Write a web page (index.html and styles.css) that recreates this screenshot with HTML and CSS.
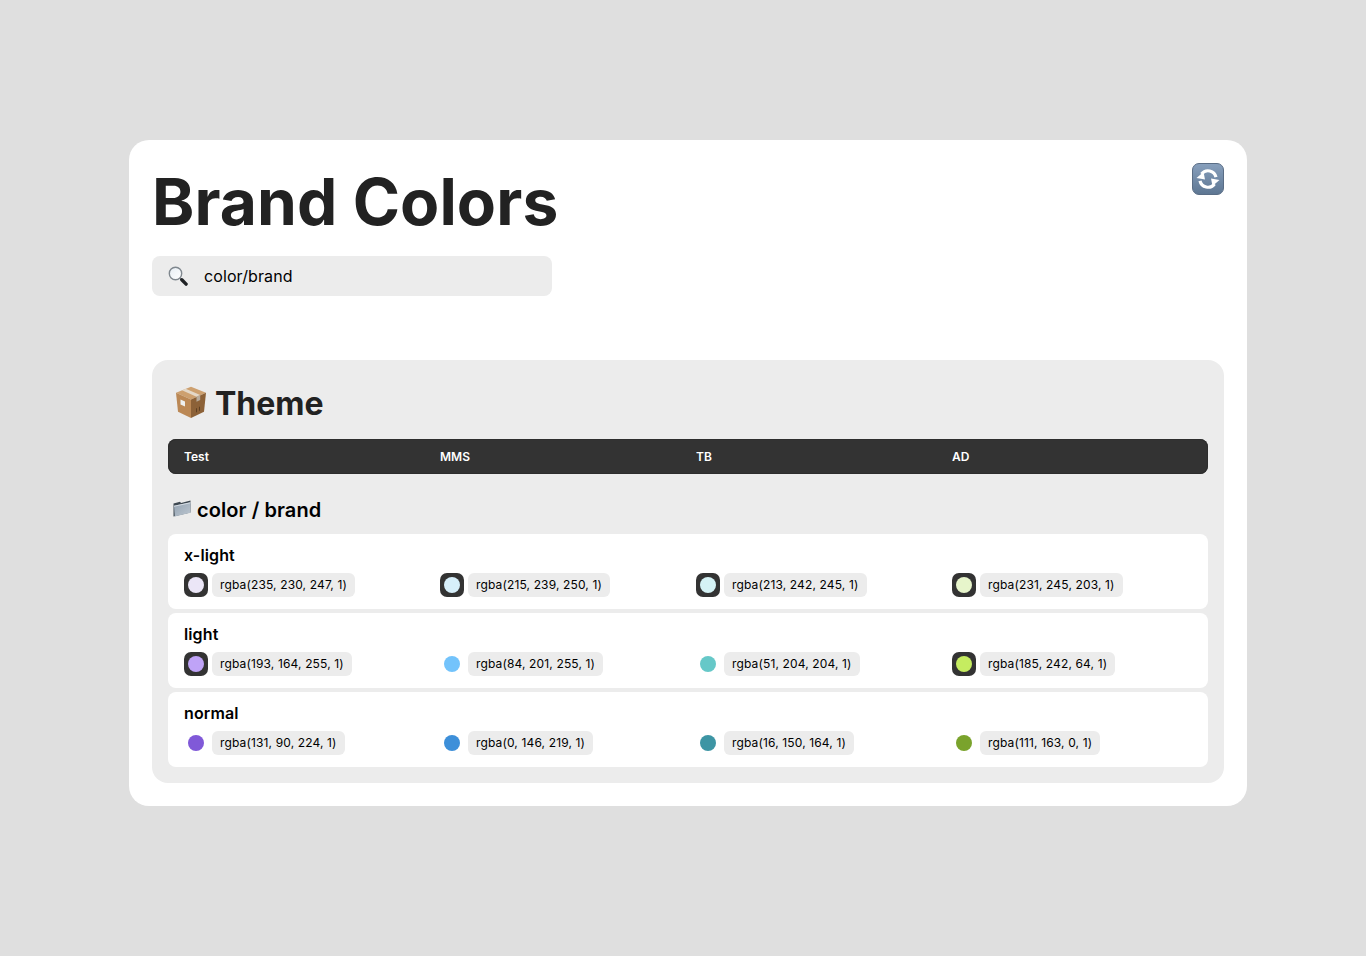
FILE: index.html
```html
<!DOCTYPE html>
<html lang="en">
<head>
<meta charset="utf-8">
<title>Brand Colors</title>
<link rel="stylesheet" href="styles.css">
</head>
<body>
<main class="card">
  <button class="refresh" aria-label="Refresh">
    <svg viewBox="0 0 32 32" width="32" height="32">
      <defs><linearGradient id="rg" x1="0" y1="0" x2="0" y2="1"><stop offset="0" stop-color="#88a0bd"/><stop offset="1" stop-color="#5d7692"/></linearGradient></defs>
      <rect x="0.500" y="0.500" width="31" height="31" rx="6.500" fill="url(#rg)" stroke="#5a6d85"/>
      <path d="M9.500 11A8.200 8.200 0 0 1 24 14.200" fill="none" stroke="#fff" stroke-width="3.200"/>
      <path d="M4.500 15L11.500 9 13 16.500z" fill="#fff"/>
      <path d="M22.500 21A8.200 8.200 0 0 1 8 17.800" fill="none" stroke="#fff" stroke-width="3.200"/>
      <path d="M27.500 17L20.500 23 19 15.500z" fill="#fff"/>
    </svg>
  </button>
  <h1 class="title">Brand Colors</h1>
  <div class="search">
    <svg class="search-icon" viewBox="0 0 20 20" width="20" height="20">
      <defs><linearGradient id="lens" x1="0" y1="0" x2="1" y2="1"><stop offset="0" stop-color="#e6edf3"/><stop offset="1" stop-color="#ffffff"/></linearGradient></defs>
      <circle cx="7.500" cy="7.500" r="6.200" fill="url(#lens)" stroke="#7f878e" stroke-width="1.400"/>
      <path d="M12 12l1.600 1.600" stroke="#8d959c" stroke-width="1.600"/>
      <path d="M13.800 13.800l4.300 4.300" stroke="#1f2225" stroke-width="3.400" stroke-linecap="round"/>
    </svg>
    <span class="search-text">color/brand</span>
  </div>
  <section class="panel">
    <h2 class="panel-title">
      <svg class="box-icon" viewBox="0 0 32 32" width="32" height="32">
        <path d="M16 .8L31 6.800 16 13.500 1 6.800z" fill="#cda06f"/>
        <path d="M1 6.800L16 13.500V32L3 25.800z" fill="#bb8855"/>
        <path d="M31 6.800L16 13.500V32L29 25.800z" fill="#8c6137"/>
        <path d="M7 4.300l14.500 6.500 3.700-1.700L10.700 2.800z" fill="#e4d8c8"/>
        <path d="M21.500 10.800v5l3.700-1.800V9.100z" fill="#b8ab9b"/>
        <path d="M5.500 13.500l4.500 2v5l-4.500-2z" fill="#eef0f0"/>
        <path d="M21 22.500l1-.5v4l-1 .5zM24 21l1-.5v4l-1 .5z" fill="#5e3f22"/>
      </svg>
      <span>Theme</span>
    </h2>
    <div class="columns header">
      <div>Test</div><div>MMS</div><div>TB</div><div>AD</div>
    </div>
    <h3 class="group-title">
      <svg class="folder-icon" viewBox="0 0 20 20" width="20" height="20">
        <defs><linearGradient id="fold" x1="0" y1="0" x2="1" y2="1"><stop offset="0" stop-color="#94a3b2"/><stop offset="1" stop-color="#bcc6d0"/></linearGradient></defs>
        <path d="M1.500 5.500l6.500-1.800 1 1.300 9.500-2.500v12L1.500 18.500z" fill="#3f4952"/>
        <path d="M2 7.800L18.500 4.200v10.600L2.800 18.500z" fill="url(#fold)"/>
        <path d="M2 7.800L18.500 4.200v1L2.100 8.800z" fill="#d5dce3"/>
      </svg>
      <span>color / brand</span>
    </h3>
    <div class="rows">
      <article class="row">
        <h4 class="row-name">x-light</h4>
        <div class="columns">
          <div class="cell"><span class="swatch ring"><i class="dot c-a1"></i></span><span class="value">rgba(235, 230, 247, 1)</span></div>
          <div class="cell"><span class="swatch ring"><i class="dot c-b1"></i></span><span class="value">rgba(215, 239, 250, 1)</span></div>
          <div class="cell"><span class="swatch ring"><i class="dot c-c1"></i></span><span class="value">rgba(213, 242, 245, 1)</span></div>
          <div class="cell"><span class="swatch ring"><i class="dot c-d1"></i></span><span class="value">rgba(231, 245, 203, 1)</span></div>
        </div>
      </article>
      <article class="row">
        <h4 class="row-name">light</h4>
        <div class="columns">
          <div class="cell"><span class="swatch ring"><i class="dot c-a2"></i></span><span class="value">rgba(193, 164, 255, 1)</span></div>
          <div class="cell"><span class="swatch"><i class="dot c-b2"></i></span><span class="value">rgba(84, 201, 255, 1)</span></div>
          <div class="cell"><span class="swatch"><i class="dot c-c2"></i></span><span class="value">rgba(51, 204, 204, 1)</span></div>
          <div class="cell"><span class="swatch ring"><i class="dot c-d2"></i></span><span class="value">rgba(185, 242, 64, 1)</span></div>
        </div>
      </article>
      <article class="row">
        <h4 class="row-name">normal</h4>
        <div class="columns">
          <div class="cell"><span class="swatch"><i class="dot c-a3"></i></span><span class="value">rgba(131, 90, 224, 1)</span></div>
          <div class="cell"><span class="swatch"><i class="dot c-b3"></i></span><span class="value">rgba(0, 146, 219, 1)</span></div>
          <div class="cell"><span class="swatch"><i class="dot c-c3"></i></span><span class="value">rgba(16, 150, 164, 1)</span></div>
          <div class="cell"><span class="swatch"><i class="dot c-d3"></i></span><span class="value">rgba(111, 163, 0, 1)</span></div>
        </div>
      </article>
    </div>
  </section>
</main>
</body>
</html>
```
FILE: styles.css
```css
* { box-sizing: border-box; }
html, body { margin: 0; padding: 0; }
body {
  min-height: 956px;
  background: #dfdfdf;
  font-family: Inter, "Liberation Sans", sans-serif;
  color: #000;
  padding: 140px 119px 0 129px;
}
.card {
  position: relative;
  width: 1118px;
  height: 666px;
  background: #fff;
  border-radius: 20px;
  padding: 24px 23px;
}
.refresh {
  position: absolute;
  top: 23px;
  right: 23px;
  width: 32px;
  height: 32px;
  padding: 0;
  border: 0;
  background: none;
  display: block;
}
.refresh svg { display: block; }
.title {
  margin: 0;
  font-size: 64px;
  line-height: 76px;
  font-weight: 700;
  letter-spacing: 0.1px;
  color: #222;
}
.search {
  margin-top: 16px;
  width: 400px;
  height: 40px;
  background: #ececec;
  border-radius: 8px;
  display: flex;
  align-items: center;
  padding-left: 16px;
}
.search-icon { flex: none; }
.search-text { margin-left: 16px; font-size: 16px; letter-spacing: 0.1px; color: #000; }
.panel {
  margin-top: 64px;
  width: 1072px;
  height: 423px;
  background: #ececec;
  border-radius: 16px;
  padding: 24px 16px 16px;
}
.panel-title {
  margin: 0 0 16px;
  height: 39px;
  padding-left: 7px;
  display: flex;
  align-items: center;
  gap: 8px;
  font-size: 32px;
  font-weight: 700;
  color: #222;
}
.box-icon { flex: none; margin-top: -4px; }
.columns { display: grid; grid-template-columns: repeat(4, 256px); }
.header {
  height: 35px;
  background: #333;
  border-radius: 8px;
  padding-left: 16px;
  align-items: center;
  color: #fff;
  font-size: 12px;
  font-weight: 600;
  box-shadow: 0 0 0 1px #2d2d2d inset;
}
.group-title {
  margin: 24px 0 12px;
  height: 24px;
  padding-left: 4px;
  display: flex;
  align-items: center;
  gap: 5px;
  font-size: 20px;
  font-weight: 600;
  letter-spacing: 0.08px;
  color: #000;
}
.folder-icon { flex: none; margin-top: -4px; }
.rows { display: flex; flex-direction: column; gap: 4px; }
.row {
  height: 75px;
  background: #fff;
  border-radius: 8px;
  padding: 11px 0 0 16px;
}
.row-name {
  margin: 0 0 8px;
  font-size: 16px;
  line-height: 20px;
  font-weight: 600;
  letter-spacing: 0.12px;
  color: #000;
}
.cell { display: flex; align-items: center; gap: 4px; }
.swatch {
  width: 24px;
  height: 24px;
  border-radius: 7px;
  display: flex;
  align-items: center;
  justify-content: center;
  flex: none;
}
.ring { background: #333; }
.dot { display: block; width: 16px; height: 16px; border-radius: 50%; }
.value {
  height: 24px;
  line-height: 24px;
  padding: 0 8px;
  background: #ececec;
  border-radius: 6px;
  font-size: 12px;
  letter-spacing: 0.14px;
  color: #000;
}
.c-a1 { background: #ebe6f7; }
.c-b1 { background: #d7effa; }
.c-c1 { background: #d5f2f5; }
.c-d1 { background: #e7f5cb; }
.c-a2 { background: #bfa3f7; }
.c-b2 { background: #73c3fb; }
.c-c2 { background: #66c8c8; }
.c-d2 { background: #c5ec60; }
.c-a3 { background: #8059d8; }
.c-b3 { background: #3d8fd9; }
.c-c3 { background: #3d95a4; }
.c-d3 { background: #7aa32c; }
```
